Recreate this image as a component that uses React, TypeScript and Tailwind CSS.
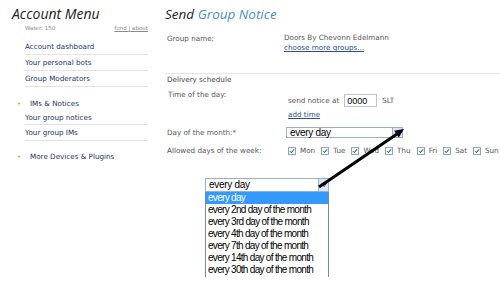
import React from "react";

const navy = "text-[#22346a]";

function Check() {
  return (
    <svg width="8" height="8" viewBox="0 0 8 8" className="shrink-0">
      <rect x="0.5" y="0.5" width="7" height="7" fill="#f4f7fb" stroke="#8ea4c0" />
      <path d="M2 4.2 L3.4 5.6 L6 2.2" fill="none" stroke="#334" strokeWidth="1" />
    </svg>
  );
}

function MenuRow({ label }: { label: string }) {
  return (
    <div className={`h-[16px] border-b border-[#e2e2e2] flex items-center pt-[1px] ${navy}`}>
      {label}
    </div>
  );
}

function Section({ label }: { label: string }) {
  return (
    <div className={`flex items-center h-[14px] ${navy}`}>
      <span className="w-[6px] text-[#e8a020] text-[7px] leading-none">•</span>
      <span className="pl-[7px]">{label}</span>
    </div>
  );
}

const days = ["Mon", "Tue", "Wed", "Thu", "Fri", "Sat", "Sun"];

const options = [
  "every day",
  "every 2nd day of the month",
  "every 3rd day of the month",
  "every 4th day of the month",
  "every 7th day of the month",
  "every 14th day of the month",
  "every 30th day of the month",
];

function SelectBox({ w, h }: { w: string; h: string }) {
  return (
    <div className={`${w} ${h} border border-[#9ab0c8] bg-white flex items-center`}>
      <span className="flex-1 pl-[3px] font-['Liberation_Sans',sans-serif] text-[10px] tracking-[-0.3px] text-black leading-none">
        every day
      </span>
      <span className="w-[10px] h-full bg-[#dbe6f3] border-l border-[#9ab0c8] flex items-center justify-center">
        <svg width="6" height="4" viewBox="0 0 6 4">
          <path d="M0.5 0.5 L3 3.5 L5.5 0.5" fill="none" stroke="#445" strokeWidth="1" />
        </svg>
      </span>
    </div>
  );
}

export default function App() {
  return (
    <div className="relative w-[500px] h-[301px] overflow-hidden bg-white font-['DejaVu_Sans',sans-serif] text-[7.2px] text-[#555]">
      <div className="flex h-[178px]">
        <aside className="w-[160px] shrink-0">
          <div className="pl-[12px] pt-[5px] h-[22px] font-['Open_Sans',sans-serif] italic text-[14px] leading-[18px] text-[#222]">
            Account Menu
          </div>
          <div className="pl-[25px] pr-[12px]">
            <div className="flex justify-between h-[12px] items-center text-[5.5px] text-[#888]">
              <span>Water: 150</span>
              <span className="underline">fund <span className="no-underline">|</span> about</span>
            </div>
            <div className="mt-[5px]">
              <MenuRow label="Account dashboard" />
              <MenuRow label="Your personal bots" />
              <MenuRow label="Group Moderators" />
            </div>
          </div>
          <div className="pl-[17px] pr-[12px] mt-[10px]">
            <Section label="IMs & Notices" />
            <div className="pl-[8px]">
              <div className={`h-[14px] border-b border-[#e2e2e2] flex items-center pt-[1px] ${navy}`}>
                Your group notices
              </div>
              <div className={`h-[16px] border-b border-[#e2e2e2] flex items-center pt-[1px] ${navy}`}>
                Your group IMs
              </div>
            </div>
            <div className="mt-[9px]">
              <Section label="More Devices & Plugins" />
            </div>
          </div>
        </aside>

        <main className="flex-1 pl-[5px] leading-[10px]">
          <div className="pt-[5px] h-[33px] font-['Open_Sans',sans-serif] italic text-[13.5px] leading-[18px]">
            <span className="text-[#222]">Send </span>
            <span className="text-[#4a8fc9]">Group Notice</span>
          </div>
          <div className="pl-[2px] flex">
            <div className="w-[117px] pt-[1px]">Group name:</div>
            <div>
              <div>Doors By Chevonn Edelmann</div>
              <div className="text-[#2a4d8f] underline">choose more groups...</div>
            </div>
          </div>
          <div className="mt-[20px] border-t border-[#e4e4e4]"></div>
          <div className="pl-[2px] h-[12px] leading-[12px] text-[#444]">Delivery schedule</div>
          <div className="pl-[3px] flex">
            <div className="w-[118px] pt-[4px]">Time of the day:</div>
            <div>
              <div className="flex items-center h-[13px] mt-[8px]">
                <span className="ml-[2px]">send notice at</span>
                <span className="ml-[5px] w-[33px] h-[13px] border border-[#b8c4d0] flex items-center pl-[2px] font-['Liberation_Sans',sans-serif] text-[9px] text-black">
                  0000
                </span>
                <span className="ml-[5px]">SLT</span>
              </div>
              <div className="ml-[2px] mt-[3px] text-[#2a4d8f] underline">add time</div>
            </div>
          </div>
          <div className="pl-[2px] flex items-center mt-[7px]">
            <div className="w-[119px]">
              Day of the month:<span className="text-[#d33]">*</span>
            </div>
            <SelectBox w="w-[117px]" h="h-[11px]" />
          </div>
          <div className="pl-[2px] flex items-center mt-[8px] h-[10px]">
            <div className="w-[121px] shrink-0">Allowed days of the week:</div>
            <div className="flex items-center gap-[6px] whitespace-nowrap">
              {days.map((d) => (
                <span key={d} className="flex items-center gap-[4px]">
                  <Check />
                  {d}
                </span>
              ))}
            </div>
          </div>
        </main>
      </div>

      <div className="ml-[205px] w-[124px]">
        <SelectBox w="w-[124px]" h="h-[14px]" />
        <div className="border-x border-[#7a8aa0] bg-white font-['Liberation_Sans',sans-serif] text-[10px] tracking-[-0.7px] text-black leading-[12px] pb-[1px]">
          {options.map((o, i) => (
            <div key={o} className={i === 0 ? "bg-[#3399ff] text-white pl-[2px]" : "pl-[2px]"}>
              {o}
            </div>
          ))}
        </div>
      </div>

      <svg className="absolute inset-0 pointer-events-none" width="500" height="301" viewBox="0 0 500 301">
        <line x1="319" y1="187" x2="397" y2="134" stroke="#000" strokeWidth="3" />
        <polygon points="404,129 398.8,137.6 394.2,130.8" fill="#000" />
      </svg>
    </div>
  );
}
